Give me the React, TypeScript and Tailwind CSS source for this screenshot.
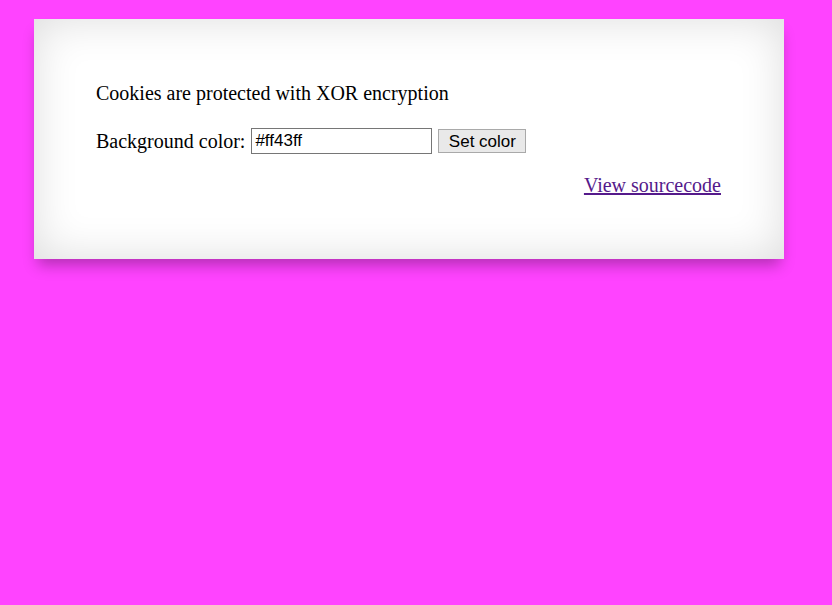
export default function App() {
  return (
    <div className="min-h-[605px] bg-[#ff43ff] pt-[19px] pl-[34px]" style={{ fontFamily: '"Liberation Serif", "Times New Roman", serif' }}>
      <div className="w-[750px] bg-white pl-[62px] pr-[63px] pt-[63px] pb-[62px] text-[20px] leading-[23px] text-black shadow-[inset_0_0_45px_rgba(0,0,0,0.14),0_10px_14px_-4px_rgba(0,0,0,0.3)]">
        <p>Cookies are protected with XOR encryption</p>
        <form className="mt-[23px] flex h-[26px] items-center" onSubmit={(e) => e.preventDefault()}>
          <label className="mr-[6px]">Background color:</label>
          <input
            type="text"
            defaultValue="#ff43ff"
            className="h-[26px] w-[181px] border border-[#767676] px-[3px] text-[17px] text-black outline-none"
            style={{ fontFamily: '"Liberation Sans", Arial, sans-serif' }}
          />
          <button
            type="submit"
            className="ml-[6px] h-[24px] w-[88px] border border-[#a9a9a9] bg-[#e9e9e9] text-[17px] leading-none text-black"
            style={{ fontFamily: '"Liberation Sans", Arial, sans-serif' }}
          >
            Set color
          </button>
        </form>
        <div className="mt-[20px] text-right">
          <a href="#" className="text-[#551a8b] underline">View sourcecode</a>
        </div>
      </div>
    </div>
  );
}
